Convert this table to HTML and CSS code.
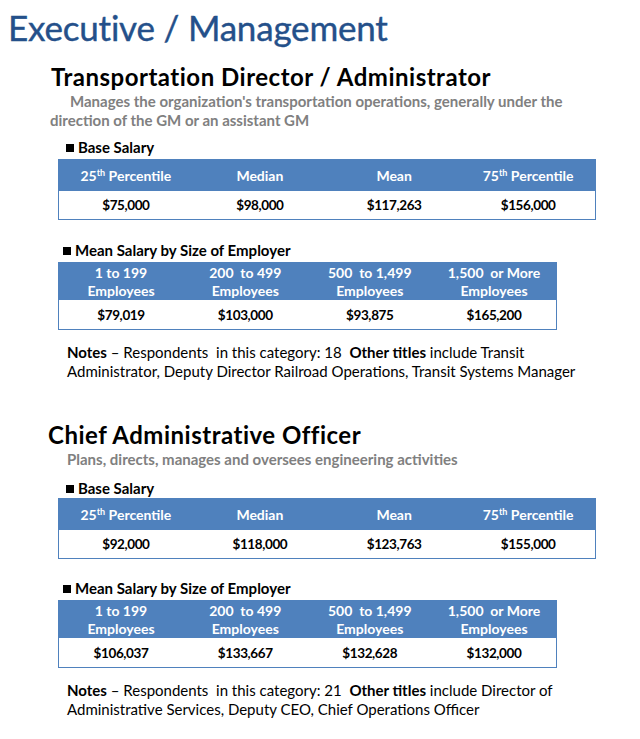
FILE: index.html
```html
<!DOCTYPE html>
<html lang="en">
<head>
<meta charset="utf-8">
<title>Executive / Management</title>
<link rel="stylesheet" href="styles.css">
</head>
<body>
<div class="page">
  <h1 class="title">Executive / Management</h1>

  <section class="job job-first">
    <h2 class="job-title">Transportation Director / Administrator</h2>
    <p class="desc desc-indent">Manages the organization's transportation operations, generally under the direction of the GM or an assistant GM</p>

    <div class="label label-base"><span class="bullet"></span>Base Salary</div>
    <table class="stats stats-base">
      <tr class="head">
        <th>25<sup>th</sup> Percentile</th><th>Median</th><th>Mean</th><th>75<sup>th</sup> Percentile</th>
      </tr>
      <tr class="body">
        <td>$75,000</td><td>$98,000</td><td>$117,263</td><td>$156,000</td>
      </tr>
    </table>

    <div class="label label-size"><span class="bullet"></span>Mean Salary by Size of Employer</div>
    <table class="stats stats-size">
      <tr class="head">
        <th>1 to 199<br>Employees</th><th>200&nbsp; to 499<br>Employees</th><th>500&nbsp; to 1,499<br>Employees</th><th>1,500&nbsp; or More<br>Employees</th>
      </tr>
      <tr class="body">
        <td>$79,019</td><td>$103,000</td><td>$93,875</td><td>$165,200</td>
      </tr>
    </table>

    <p class="notes"><b>Notes</b> – Respondents&nbsp; in this category: 18&nbsp; <b>Other titles</b> include Transit Administrator, Deputy&nbsp;Director Railroad Operations, Transit Systems Manager</p>
  </section>

  <section class="job job-second">
    <h2 class="job-title">Chief Administrative Officer</h2>
    <p class="desc desc-short">Plans, directs, manages and oversees engineering activities</p>

    <div class="label label-base"><span class="bullet"></span>Base Salary</div>
    <table class="stats stats-base">
      <tr class="head">
        <th>25<sup>th</sup> Percentile</th><th>Median</th><th>Mean</th><th>75<sup>th</sup> Percentile</th>
      </tr>
      <tr class="body">
        <td>$92,000</td><td>$118,000</td><td>$123,763</td><td>$155,000</td>
      </tr>
    </table>

    <div class="label label-size"><span class="bullet"></span>Mean Salary by Size of Employer</div>
    <table class="stats stats-size">
      <tr class="head">
        <th>1 to 199<br>Employees</th><th>200&nbsp; to 499<br>Employees</th><th>500&nbsp; to 1,499<br>Employees</th><th>1,500&nbsp; or More<br>Employees</th>
      </tr>
      <tr class="body">
        <td>$106,037</td><td>$133,667</td><td>$132,628</td><td>$132,000</td>
      </tr>
    </table>

    <p class="notes"><b>Notes</b> – Respondents&nbsp; in this category: 21&nbsp; <b>Other titles</b> include Director of Administrative Services, Deputy CEO, Chief Operations Officer</p>
  </section>
</div>
</body>
</html>
```

FILE: styles.css
```css
html, body {
  margin: 0;
  padding: 0;
  background: #ffffff;
}

body {
  font-family: Lato, "Open Sans", "Liberation Sans", sans-serif;
  color: #000;
}

.page {
  width: 640px;
  height: 739px;
  overflow: hidden;
}

.title {
  margin: 0;
  padding: 6px 0 0 8px;
  font-size: 35px;
  line-height: 42px;
  font-weight: 400;
  color: #24508a;
  letter-spacing: -0.2px;
  -webkit-text-stroke: 0.4px #24508a;
}

.job-title {
  margin: 0;
  font-size: 24px;
  font-weight: 700;
  line-height: 28px;
  color: #000;
  letter-spacing: 0.5px;
}

.job-first {
  padding: 15px 0 0 51px;
}

.job-second {
  padding: 40px 0 0 48px;
}

.desc {
  margin: 0;
  font-size: 15px;
  font-weight: 700;
  line-height: 19px;
  color: #808080;
}

.desc-indent {
  margin: 1px 0 0 -1px;
  width: 530px;
  text-indent: 20px;
}

.desc-short {
  margin-top: 1px;
  padding-left: 19px;
}

.label {
  display: flex;
  align-items: center;
  gap: 4px;
  font-size: 15px;
  font-weight: 700;
  line-height: 19px;
}

.bullet {
  display: inline-block;
  width: 8px;
  height: 8px;
  background: #000;
}

.job-first .label-base {
  margin: 8px 0 0 15px;
}

.job-first .label-size {
  margin: 21px 0 0 12px;
}

.job-second .label-base {
  margin: 10px 0 0 18px;
}

.job-second .label-size {
  margin: 20px 0 0 15px;
}

.stats {
  border-collapse: collapse;
  table-layout: fixed;
  border: 1px solid #4f81bd;
}

.job-first .stats {
  margin-left: 7px;
}

.job-second .stats {
  margin-left: 10px;
}

.stats-base {
  width: 538px;
  margin-top: 2px;
}

.stats-size {
  width: 499px;
  margin-top: 2px;
}

.job-second .stats-base {
  margin-top: 0;
}

.job-second .stats-size {
  margin-top: 2px;
}

.stats th,
.stats td {
  text-align: center;
  padding: 0;
  font-weight: 700;
}

.stats th {
  background: #4f81bd;
  color: #fff;
  font-size: 14px;
}

.stats-base .head th {
  height: 31px;
}

.stats-size .head th {
  height: 37px;
  line-height: 18px;
}

.stats .body td {
  height: 28px;
  font-size: 13.5px;
  letter-spacing: -0.4px;
  color: #000;
}

.stats-size .body td {
  height: 29px;
}

.stats sup {
  font-size: 9px;
  line-height: 0;
  vertical-align: 5px;
}

.notes {
  margin: 13px 0 0 16px;
  width: 510px;
  font-size: 15px;
  line-height: 19px;
  font-weight: 400;
}

.job-second .notes {
  margin-left: 19px;
}
```
